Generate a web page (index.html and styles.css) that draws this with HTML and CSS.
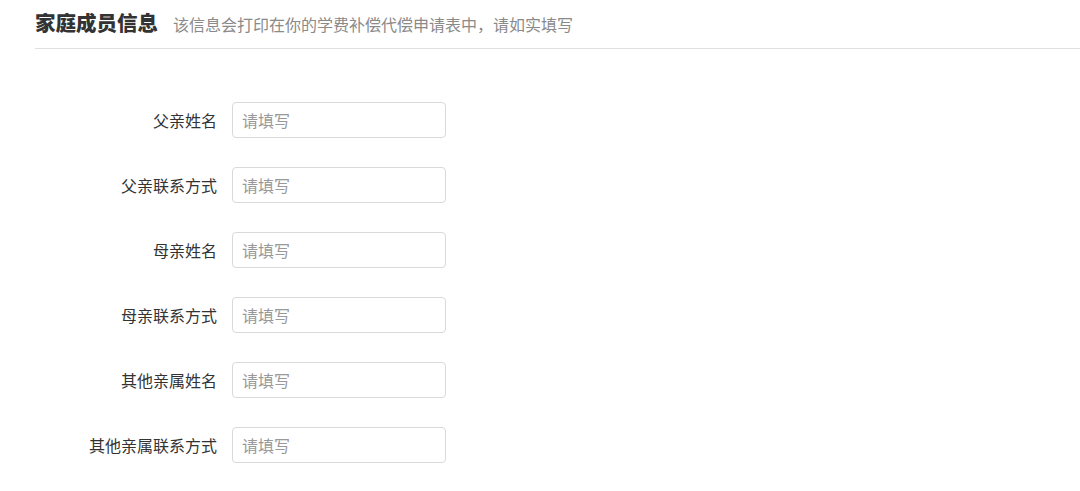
FILE: index.html
```html
<!DOCTYPE html>
<html lang="zh-CN">
<head>
<meta charset="utf-8">
<title>家庭成员信息</title>
<link rel="stylesheet" href="styles.css">
</head>
<body>
<div class="page">
  <div class="section-head">
    <span class="section-title">家庭成员信息</span>
    <span class="section-sub">该信息会打印在你的学费补偿代偿申请表中，请如实填写</span>
  </div>
  <form class="form">
    <div class="row">
      <label class="label">父亲姓名</label>
      <input class="input" type="text" placeholder="请填写">
    </div>
    <div class="row">
      <label class="label">父亲联系方式</label>
      <input class="input" type="text" placeholder="请填写">
    </div>
    <div class="row">
      <label class="label">母亲姓名</label>
      <input class="input" type="text" placeholder="请填写">
    </div>
    <div class="row">
      <label class="label">母亲联系方式</label>
      <input class="input" type="text" placeholder="请填写">
    </div>
    <div class="row">
      <label class="label">其他亲属姓名</label>
      <input class="input" type="text" placeholder="请填写">
    </div>
    <div class="row">
      <label class="label">其他亲属联系方式</label>
      <input class="input" type="text" placeholder="请填写">
    </div>
  </form>
</div>
</body>
</html>
```
FILE: styles.css
```css
html, body {
  margin: 0;
  padding: 0;
  background: #ffffff;
}
body {
  font-family: "Noto Sans CJK SC", "Noto Sans", "Liberation Sans", sans-serif;
  color: #333333;
}
.page {
  padding-left: 35px;
}
.section-head {
  padding-top: 7px;
  padding-bottom: 11px;
  height: 30px;
  line-height: 30px;
  border-bottom: 1px solid #e0e0e0;
  display: flex;
  align-items: baseline;
  gap: 15px;
}
.section-title {
  font-size: 20.5px;
  font-weight: 900;
  color: #333333;
}
.section-sub {
  font-size: 16px;
  color: #8a8a8a;
}
.form {
  padding-top: 53px;
  display: flex;
  flex-direction: column;
  gap: 29px;
}
.row {
  display: flex;
  align-items: center;
  height: 36px;
}
.label {
  width: 182px;
  margin-right: 15px;
  text-align: right;
  font-size: 16px;
  color: #333333;
}
.input {
  box-sizing: border-box;
  width: 214px;
  height: 36px;
  margin: 0;
  padding: 0 9px;
  border: 1px solid #d9d9d9;
  border-radius: 4px;
  font-family: inherit;
  font-size: 16px;
  color: #333333;
  outline: none;
  background: #ffffff;
}
.input::placeholder {
  color: #999999;
}
```
